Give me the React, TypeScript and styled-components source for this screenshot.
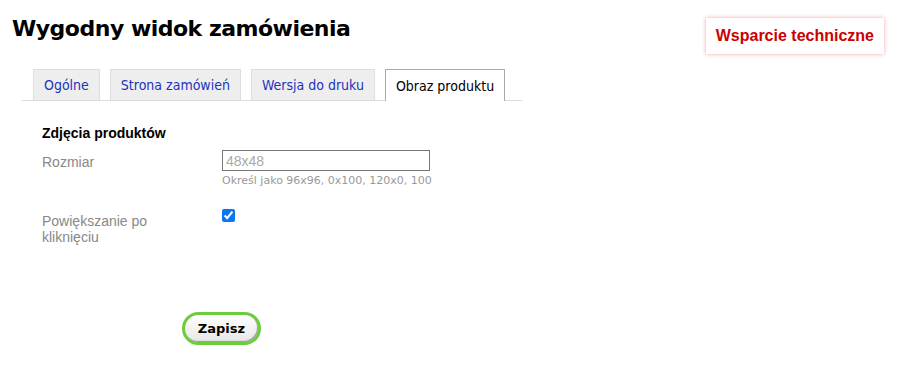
import React, { useState } from 'react';
import styled, { createGlobalStyle } from 'styled-components';

const GlobalStyle = createGlobalStyle`
  html, body {
    margin: 0;
    padding: 0;
    background: #fff;
  }
  body {
    font-family: "Liberation Sans", Arial, sans-serif;
  }
`;

const Page = styled.div`
  width: 907px;
  height: 376px;
  box-sizing: border-box;
  padding: 12px 23px 0 12px;
`;

const Header = styled.div`
  display: flex;
  justify-content: space-between;
  align-items: flex-start;
`;

const Title = styled.h1`
  margin: 0;
  padding-top: 3px;
  height: 28px;
  font-family: "DejaVu Sans", Verdana, sans-serif;
  font-size: 22px;
  line-height: 28px;
  font-weight: bold;
  letter-spacing: -0.5px;
  color: #000;
`;

const SupportButton = styled.a`
  display: inline-block;
  margin-top: 6px;
  padding: 9px 10px;
  background: #fff;
  color: #cc0000;
  font-size: 16px;
  font-weight: bold;
  text-decoration: none;
  box-shadow: 0 0 4px rgba(230, 40, 40, 0.45);
  cursor: pointer;
`;

const TabBar = styled.div`
  display: flex;
  gap: 10px;
  margin: 15px 0 0 10px;
  padding-left: 11px;
  width: 489px;
  border-bottom: 1px solid #ddd;
`;

const Tab = styled.div<{ $active?: boolean }>`
  box-sizing: border-box;
  padding: 0 10px;
  display: flex;
  align-items: center;
  font-family: "DejaVu Sans Condensed", "DejaVu Sans", sans-serif;
  font-size: 14px;
  color: ${p => (p.$active ? '#000' : '#2233bb')};
  background: ${p => (p.$active ? '#fff' : '#eeeeee')};
  border: 1px solid ${p => (p.$active ? '#aaa' : '#dddddd')};
  border-bottom: none;
  margin-bottom: ${p => (p.$active ? '-1px' : '0')};
  height: ${p => (p.$active ? '32px' : '31px')};
  cursor: pointer;
`;

const Form = styled.div`
  padding: 24px 0 0 30px;
`;

const SectionTitle = styled.div`
  font-size: 14px;
  font-weight: bold;
  color: #000;
  margin-bottom: 9px;
`;

const Row = styled.div`
  display: grid;
  grid-template-columns: 180px 1fr;
  margin-bottom: 22px;
`;

const Label = styled.div`
  font-size: 14px;
  color: #888;
  line-height: 16px;
  padding-top: 4px;
  width: 130px;
`;

const Field = styled.div`
  display: flex;
  flex-direction: column;
  align-items: flex-start;
`;

const TextInput = styled.input`
  width: 208px;
  height: 21px;
  box-sizing: border-box;
  border: 1px solid #767676;
  padding: 1px 3px;
  font-family: "Liberation Sans", Arial, sans-serif;
  font-size: 14px;
  color: #333;
  &::placeholder {
    color: #aaa;
  }
`;

const Hint = styled.div`
  margin-top: 3px;
  font-family: "DejaVu Sans", Verdana, sans-serif;
  font-size: 11px;
  color: #999;
`;

const Checkbox = styled.input`
  margin: 0;
  width: 13px;
  height: 13px;
  accent-color: #0b75f5;
`;

const Actions = styled.div`
  padding: 45px 0 0 140px;
`;

const SaveButton = styled.button`
  width: 79px;
  height: 33px;
  border-radius: 17px;
  border: 3px solid #6ccc3c;
  background: linear-gradient(#ffffff, #e6e6e6);
  box-shadow: inset -1px -1px 1px rgba(0, 0, 0, 0.35);
  font-family: "DejaVu Sans", Verdana, sans-serif;
  font-size: 13px;
  font-weight: bold;
  color: #000;
  cursor: pointer;
`;

const tabs = ['Ogólne', 'Strona zamówień', 'Wersja do druku', 'Obraz produktu'];

export default function App() {
  const [active, setActive] = useState(3);
  const [zoom, setZoom] = useState(true);
  return (
    <>
      <GlobalStyle />
      <Page>
        <Header>
          <Title>Wygodny widok zamówienia</Title>
          <SupportButton>Wsparcie techniczne</SupportButton>
        </Header>
        <TabBar>
          {tabs.map((t, i) => (
            <Tab key={t} $active={i === active} onClick={() => setActive(i)}>
              {t}
            </Tab>
          ))}
        </TabBar>
        <Form>
          <SectionTitle>Zdjęcia produktów</SectionTitle>
          <Row>
            <Label>Rozmiar</Label>
            <Field>
              <TextInput placeholder="48x48" />
              <Hint>Określ jako 96x96, 0x100, 120x0, 100</Hint>
            </Field>
          </Row>
          <Row>
            <Label>Powiększanie po kliknięciu</Label>
            <Field>
              <Checkbox type="checkbox" checked={zoom} onChange={e => setZoom(e.target.checked)} />
            </Field>
          </Row>
          <Actions>
            <SaveButton>Zapisz</SaveButton>
          </Actions>
        </Form>
      </Page>
    </>
  );
}
